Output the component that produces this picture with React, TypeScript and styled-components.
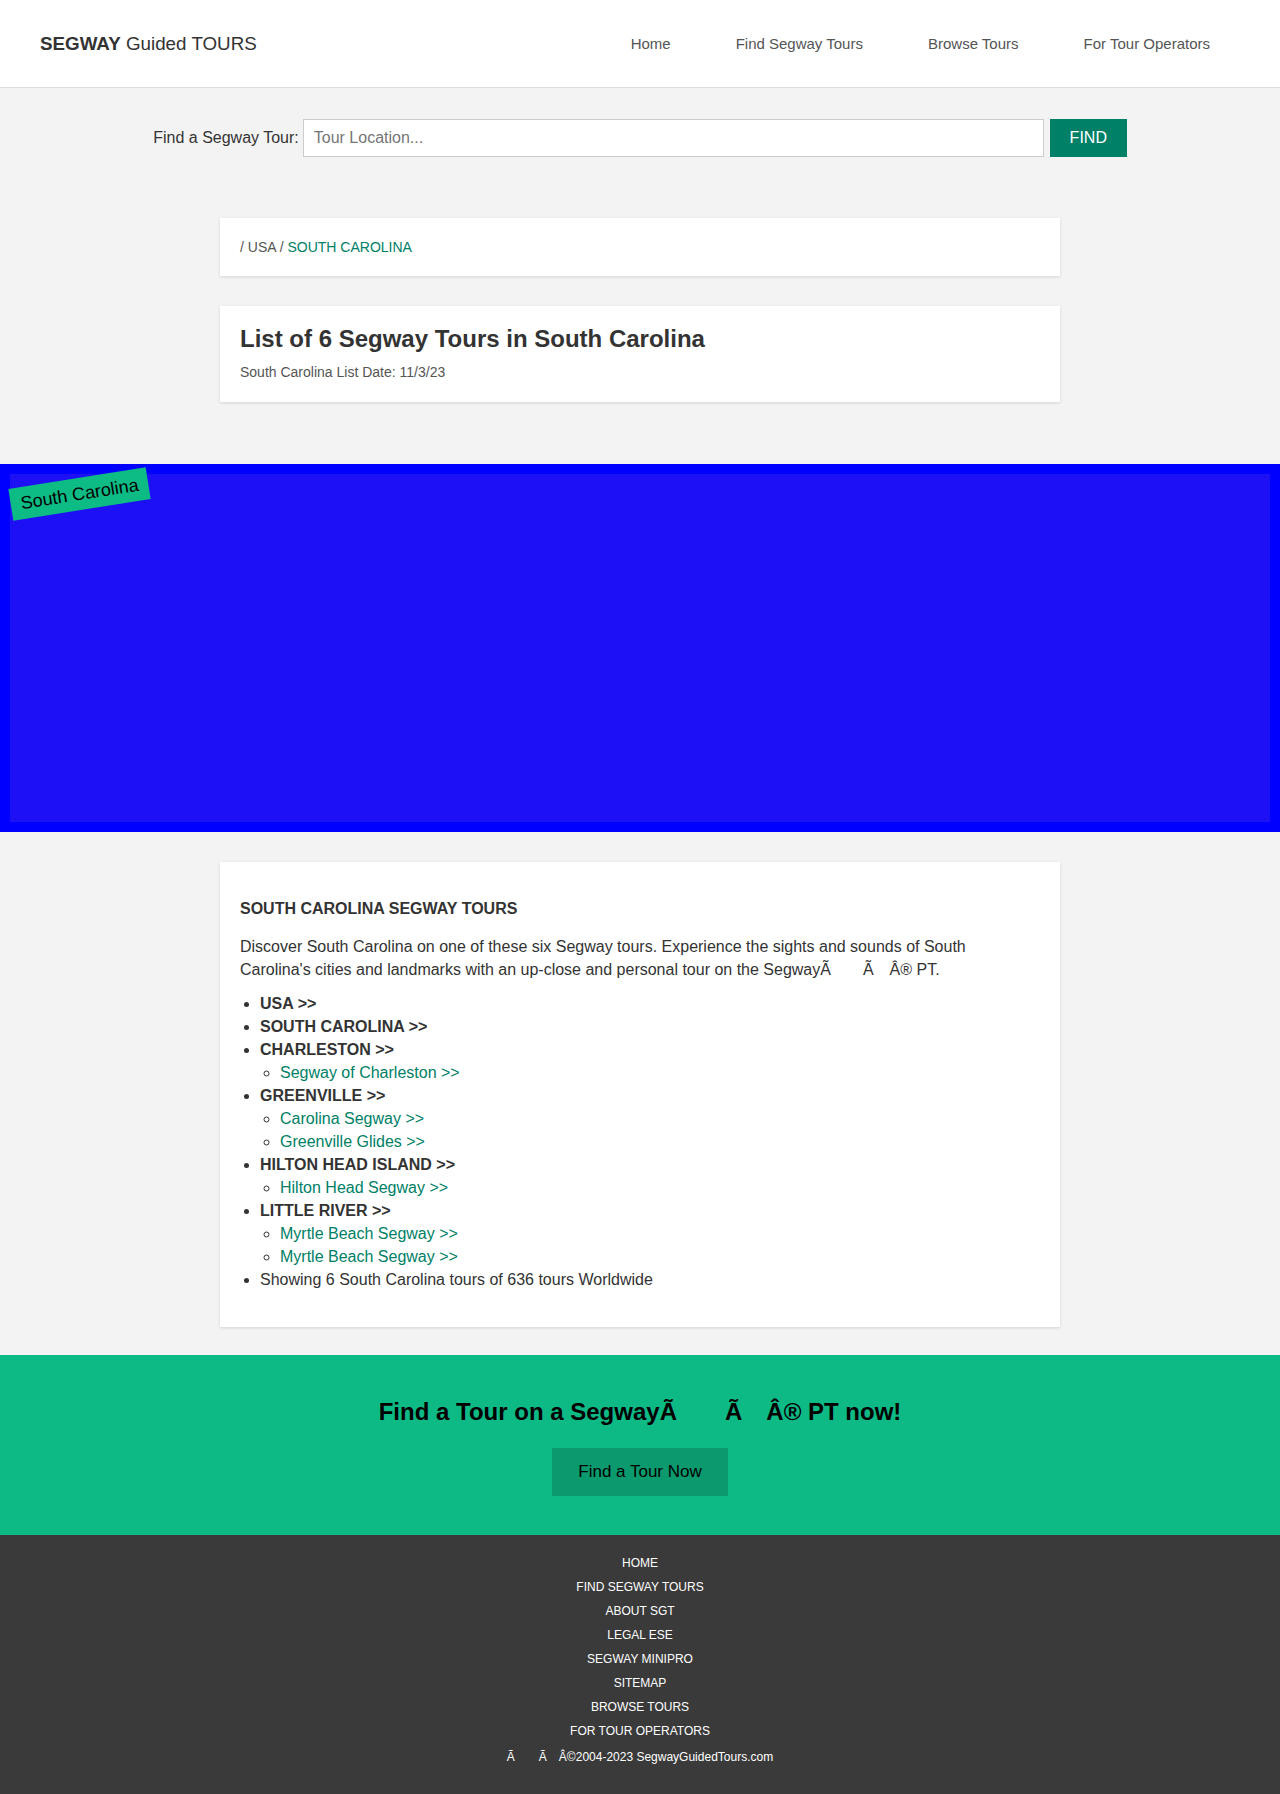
import React from "react";
import styled, { createGlobalStyle } from "styled-components";

const GlobalStyle = createGlobalStyle`
  html, body {
    margin: 0;
    padding: 0;
  }
  body {
    background: #f3f3f3;
    color: #333;
    font-family: "Liberation Sans", Arial, Helvetica, sans-serif;
    font-size: 16px;
  }
  * {
    box-sizing: border-box;
  }
  a {
    text-decoration: none;
  }
`;

const Header = styled.header`
  display: flex;
  align-items: center;
  justify-content: space-between;
  height: 88px;
  padding: 0 40px;
  background: #fff;
  border-bottom: 1px solid #ddd;
`;

const Logo = styled.div`
  font-size: 18.8px;
  color: #333;

  b {
    font-weight: bold;
  }
`;

const Nav = styled.nav`
  display: flex;
  align-items: center;
`;

const NavLink = styled.a`
  padding: 0 32.5px;
  font-size: 15px;
  color: #555;

  &:last-child {
    padding-right: 30px;
  }
`;

const SearchBar = styled.section`
  display: flex;
  align-items: center;
  justify-content: center;
  gap: 4px;
  padding: 31px 0 31px;
`;

const SearchLabel = styled.label`
  font-size: 16px;
  color: #333;
`;

const SearchInput = styled.input`
  width: 741px;
  height: 38px;
  padding: 0 10px;
  border: 1px solid #ccc;
  font-family: inherit;
  font-size: 16px;
  color: #333;
  background: #fff;

  &::placeholder {
    color: #757575;
  }
`;

const FindButton = styled.button`
  width: 77px;
  height: 38px;
  margin-left: 2px;
  border: none;
  background: #008066;
  color: #fff;
  font-family: inherit;
  font-size: 16px;
  cursor: pointer;
`;

const Main = styled.main`
  display: flex;
  flex-direction: column;
  gap: 30px;
  padding: 30px 0 28px;
`;

const Card = styled.div`
  width: 840px;
  margin: 0 auto;
  padding: 20px;
  background: #fff;
  box-shadow: 0 1px 3px rgba(0, 0, 0, 0.13);
`;

const Crumbs = styled.div`
  font-size: 14px;
  line-height: 18px;
  color: #555;

  a {
    color: #008066;
  }
`;

const Title = styled.h1`
  margin: 0;
  font-size: 24px;
  line-height: 1.1;
  color: #333;
`;

const ListDate = styled.div`
  margin-top: 10px;
  font-size: 14px;
  line-height: 20px;
  color: #555;
`;

const MapBox = styled.div`
  position: relative;
  height: 368px;
  margin-top: 32px;
  border: 10px solid #0000ff;
  background: #1d10f5;
`;

const MapLabel = styled.span`
  position: absolute;
  left: 0;
  top: 4px;
  padding: 6px 10px;
  font-size: 18px;
  line-height: 20px;
  color: #000;
  background: #0dbb85;
  transform: rotate(-9deg);
`;

const ToursCard = styled(Card)`
  padding-bottom: 20px;
`;

const SectionHeading = styled.h3`
  margin: 18px 0;
  font-size: 16px;
  line-height: 1.1;
  text-transform: uppercase;
  color: #333;
`;

const Intro = styled.p`
  margin: 0 0 10px;
  font-size: 16px;
  line-height: 1.42857;
  color: #333;
`;

const TourList = styled.ul<{ $nested?: boolean }>`
  margin: 0 0 ${(p) => (p.$nested ? "0" : "16px")};
  padding-left: 20px;
  list-style: ${(p) => (p.$nested ? "circle" : "disc")};
  font-size: 16px;
  line-height: 23px;
  color: #333;
`;

const Region = styled.li`
  font-weight: bold;
`;

const Plain = styled.li`
  font-weight: normal;
`;

const TourLink = styled.a`
  font-weight: normal;
  color: #008066;
`;

const Cta = styled.section`
  display: flex;
  flex-direction: column;
  align-items: center;
  padding: 44px 0 39px;
  background: #0dba86;
`;

const CtaHeading = styled.h2`
  margin: 0 0 23px;
  font-size: 24px;
  line-height: 26px;
  color: #000;
`;

const CtaButton = styled.a`
  display: flex;
  align-items: center;
  justify-content: center;
  width: 176px;
  height: 48px;
  background: #0a9a6e;
  color: #000;
  font-size: 17px;
`;

const Footer = styled.footer`
  display: flex;
  flex-direction: column;
  align-items: center;
  padding: 16px 0 26px;
  background: #3a3a3a;
`;

const FooterLink = styled.a`
  font-size: 12px;
  line-height: 24px;
  text-transform: uppercase;
  color: #fff;
`;

const Copyright = styled.div`
  margin-top: 2px;
  font-size: 12px;
  line-height: 24px;
  color: #fff;
`;

const navItems = ["Home", "Find Segway Tours", "Browse Tours", "For Tour Operators"];

const footerItems = [
  "Home",
  "Find Segway Tours",
  "About SGT",
  "Legal Ese",
  "Segway miniPRO",
  "Sitemap",
  "Browse Tours",
  "For Tour Operators",
];

type City = { name: string; tours: string[] };

const cities: City[] = [
  { name: "Charleston", tours: ["Segway of Charleston"] },
  { name: "Greenville", tours: ["Carolina Segway", "Greenville Glides"] },
  { name: "Hilton Head Island", tours: ["Hilton Head Segway"] },
  { name: "Little River", tours: ["Myrtle Beach Segway", "Myrtle Beach Segway"] },
];

// mangled ® as it shows on the live page
const mangled = "\u00c3\u2003\u2003\u00c3\u2003\u00c2";

const App: React.FC = () => {
  return (
    <>
      <GlobalStyle />
      <Header>
        <Logo>
          <b>SEGWAY</b> Guided TOURS
        </Logo>
        <Nav>
          {navItems.map((item) => (
            <NavLink key={item} href="#">
              {item}
            </NavLink>
          ))}
        </Nav>
      </Header>

      <SearchBar>
        <SearchLabel htmlFor="loc">Find a Segway Tour:</SearchLabel>
        <SearchInput id="loc" placeholder="Tour Location..." />
        <FindButton>FIND</FindButton>
      </SearchBar>

      <Main>
        <Card>
          <Crumbs>
            / USA / <a href="#">SOUTH CAROLINA</a>
          </Crumbs>
        </Card>

        <Card>
          <Title>List of 6 Segway Tours in South Carolina</Title>
          <ListDate>South Carolina List Date: 11/3/23</ListDate>
        </Card>

        <MapBox>
          <MapLabel>South Carolina</MapLabel>
        </MapBox>

        <ToursCard>
          <SectionHeading>South Carolina Segway Tours</SectionHeading>
          <Intro>
            Discover South Carolina on one of these six Segway tours. Experience the sights and
            sounds of South Carolina's cities and landmarks with an up-close and personal tour on
            the Segway{mangled}® PT.
          </Intro>
          <TourList>
            <Region>USA &gt;&gt;</Region>
            <Region>SOUTH CAROLINA &gt;&gt;</Region>
            {cities.map((city) => (
              <Region key={city.name}>
                {city.name.toUpperCase()} &gt;&gt;
                <TourList $nested>
                  {city.tours.map((tour, i) => (
                    <Plain key={i}>
                      <TourLink href="#">{tour} &gt;&gt;</TourLink>
                    </Plain>
                  ))}
                </TourList>
              </Region>
            ))}
            <Plain>Showing 6 South Carolina tours of 636 tours Worldwide</Plain>
          </TourList>
        </ToursCard>
      </Main>

      <Cta>
        <CtaHeading>Find a Tour on a Segway{mangled}® PT now!</CtaHeading>
        <CtaButton href="#">Find a Tour Now</CtaButton>
      </Cta>

      <Footer>
        {footerItems.map((item) => (
          <FooterLink key={item} href="#">
            {item}
          </FooterLink>
        ))}
        <Copyright>{mangled}©2004-2023 SegwayGuidedTours.com</Copyright>
      </Footer>
    </>
  );
};

export default App;
